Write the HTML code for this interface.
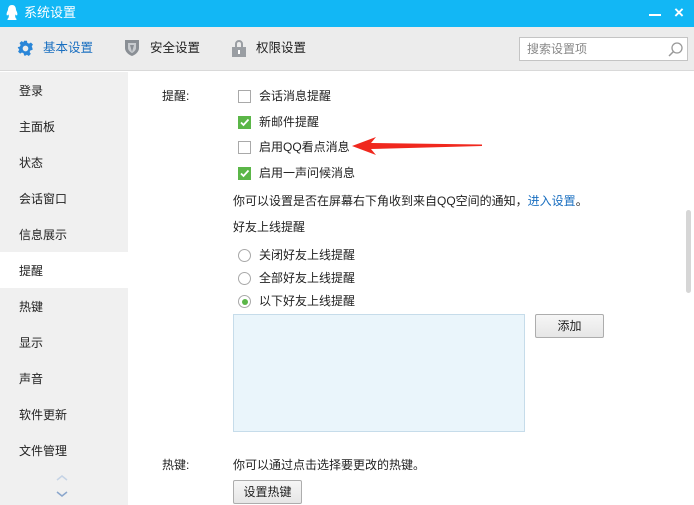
<!DOCTYPE html>
<html><head><meta charset="utf-8"><style>
*{margin:0;padding:0;box-sizing:border-box}
body{width:694px;height:505px;overflow:hidden;font-family:"Liberation Sans","Microsoft YaHei","Noto Sans CJK SC",sans-serif;font-size:12px;color:#222;background:#fff;position:relative}
.abs{position:absolute}
#title{left:0;top:0;width:694px;height:27px;background:#12b7f5;color:#fff}
#tb{left:0;top:27px;width:694px;height:44px;background:#ececec;border-bottom:1px solid #d9d9d9}
#side{left:0;top:72px;width:128px;height:433px;background:#f0f0f0}
.si{position:absolute;left:19px;font-size:12px;color:#222}
.cb{position:absolute;width:13px;height:13px;border:1px solid #a9a9a9;background:#fff}
.cb.on{background:#5bb648;border-color:#5bb648}
.rd{position:absolute;width:13px;height:13px;border:1px solid #a9a9a9;border-radius:50%;background:#fff}
.t{position:absolute;white-space:nowrap;line-height:14px}
.si{line-height:14px}
.btn{position:absolute;border:1px solid #adadad;border-radius:2px;background:linear-gradient(#f6f6f6,#e6e6e6);text-align:center;line-height:22px}
</style></head><body>
<div id="title" class="abs">
<svg class="abs" style="left:6px;top:5px" width="12" height="16" viewBox="0 0 12 16"><path d="M6 0C3 0 2 2.5 2 5C1 7 0 9 1 10.5C2 10 2 10 2.5 9.5C3 11 3 12 2 13.5C1 14 1 15 3 15H9C11 15 11 14 10 13.5C9 12 9 11 9.5 9.5C10 10 10 10 11 10.5C12 9 11 7 10 5C10 2.5 9 0 6 0Z" fill="#fff"/></svg>
<div class="t" style="left:24px;top:5px;font-size:13px;line-height:15px">系统设置</div>
<div class="abs" style="left:649px;top:14px;width:12px;height:2px;background:#fff"></div>
<div class="t" style="left:674px;top:4px;font-size:17px;line-height:17px;font-weight:bold">×</div>
</div>
<div id="tb" class="abs">
<svg class="abs" style="left:17px;top:13px" width="17" height="17" viewBox="0 0 24 24"><path fill="#2a86d8" d="M10 1h4l.6 3 2.4 1.2 2.6-1.7 2.9 2.9-1.7 2.6L22 12l-.2 0 .2 2-3 .6-1.2 2.4 1.7 2.6-2.9 2.9-2.6-1.7L12 22l-2-.2-.6-3-2.4-1.2-2.6 1.7-2.9-2.9 1.7-2.6L2 12l-1-2 3-.6 1.2-2.4L3.5 4.4 6.4 1.5 9 3.2 10 1zM12 8a4 4 0 100 8 4 4 0 000-8z"/></svg>
<div class="t" style="left:43px;top:14px;color:#1a6fc0;font-size:12.5px">基本设置</div>
<svg class="abs" style="left:124px;top:12px" width="16" height="18" viewBox="0 0 16 18"><path d="M1 1h14v8c0 4-4 7-7 8C5 16 1 13 1 9z" fill="#8a8f95"/><path d="M4 4h8v5c0 2-2 4-4 5-2-1-4-3-4-5z" fill="#c8cbcf"/><path d="M6 6h4L8 13z" fill="#8a8f95"/></svg>
<div class="t" style="left:150px;top:14px;font-size:12.5px">安全设置</div>
<svg class="abs" style="left:231px;top:12px" width="16" height="18" viewBox="0 0 16 18"><path d="M4 8V5a4 4 0 018 0v3h-2V5a2 2 0 00-4 0v3z" fill="#9a9ea3"/><rect x="1" y="8" width="14" height="10" fill="#9a9ea3"/><rect x="7" y="11" width="2" height="4" fill="#fff"/></svg>
<div class="t" style="left:256px;top:14px;font-size:12.5px">权限设置</div>
<div class="abs" style="left:519px;top:10px;width:169px;height:24px;background:#fff;border:1px solid #c4c4c4"></div>
<div class="t" style="left:527px;top:15px;color:#888">搜索设置项</div>
<svg class="abs" style="left:667px;top:14px" width="17" height="17" viewBox="0 0 17 17"><circle cx="10" cy="7" r="5" fill="none" stroke="#999" stroke-width="1.3"/><path d="M6.5 10.5L2 15" stroke="#999" stroke-width="1.5"/></svg>
</div>
<div id="side" class="abs">
<div class="abs" style="left:0;top:180px;width:128px;height:36px;background:#fff"></div>
<div class="si" style="top:12px">登录</div>
<div class="si" style="top:48px">主面板</div>
<div class="si" style="top:84px">状态</div>
<div class="si" style="top:120px">会话窗口</div>
<div class="si" style="top:156px">信息展示</div>
<div class="si" style="top:192px">提醒</div>
<div class="si" style="top:228px">热键</div>
<div class="si" style="top:264px">显示</div>
<div class="si" style="top:300px">声音</div>
<div class="si" style="top:336px">软件更新</div>
<div class="si" style="top:372px">文件管理</div>
<svg class="abs" style="left:56px;top:402px" width="12" height="8"><path d="M1 6L6 2L11 6" fill="none" stroke="#c5d3e5" stroke-width="1.5"/></svg>
<svg class="abs" style="left:56px;top:418px" width="12" height="8"><path d="M1 2L6 6L11 2" fill="none" stroke="#8aa6cc" stroke-width="1.5"/></svg>
</div>
<div class="abs" style="left:686px;top:210px;width:5px;height:83px;background:#d6d6d6;border-radius:3px"></div>
<div class="t" style="left:162px;top:89px">提醒:</div>
<div class="cb" style="left:238px;top:90px"></div><div class="t" style="left:259px;top:89px">会话消息提醒</div>
<div class="cb on" style="left:238px;top:116px"><svg width="11" height="11" style="position:absolute;left:0;top:0"><path d="M2 5.5L4.5 8L9.5 2.5" fill="none" stroke="#fff" stroke-width="1.8"/></svg></div><div class="t" style="left:259px;top:115px">新邮件提醒</div>
<div class="cb" style="left:238px;top:141px"></div><div class="t" style="left:259px;top:140px">启用QQ看点消息</div>
<div class="cb on" style="left:238px;top:167px"><svg width="11" height="11" style="position:absolute;left:0;top:0"><path d="M2 5.5L4.5 8L9.5 2.5" fill="none" stroke="#fff" stroke-width="1.8"/></svg></div><div class="t" style="left:259px;top:166px">启用一声问候消息</div>
<svg class="abs" style="left:350px;top:136px" width="135" height="20"><path d="M2 10L26 1L21 7L132 8.5L132 10L21 13L26 19Z" fill="#f0281e"/></svg>
<div class="t" style="left:233px;top:194px">你可以设置是否在屏幕右下角收到来自QQ空间的通知，<span style="color:#1a6fc0">进入设置</span>。</div>
<div class="t" style="left:233px;top:220px">好友上线提醒</div>
<div class="rd" style="left:238px;top:249px"></div><div class="t" style="left:259px;top:248px">关闭好友上线提醒</div>
<div class="rd" style="left:238px;top:272px"></div><div class="t" style="left:259px;top:271px">全部好友上线提醒</div>
<div class="rd" style="left:238px;top:295px"><div style="position:absolute;left:2.5px;top:2.5px;width:6px;height:6px;border-radius:50%;background:#5bb648"></div></div><div class="t" style="left:259px;top:294px">以下好友上线提醒</div>
<div class="abs" style="left:233px;top:314px;width:292px;height:118px;background:#eaf5fb;border:1px solid #c6dcea"></div>
<div class="btn" style="left:535px;top:314px;width:69px;height:24px">添加</div>
<div class="t" style="left:162px;top:458px">热键:</div>
<div class="t" style="left:233px;top:458px">你可以通过点击选择要更改的热键。</div>
<div class="btn" style="left:233px;top:480px;width:69px;height:24px">设置热键</div>
</body></html>
